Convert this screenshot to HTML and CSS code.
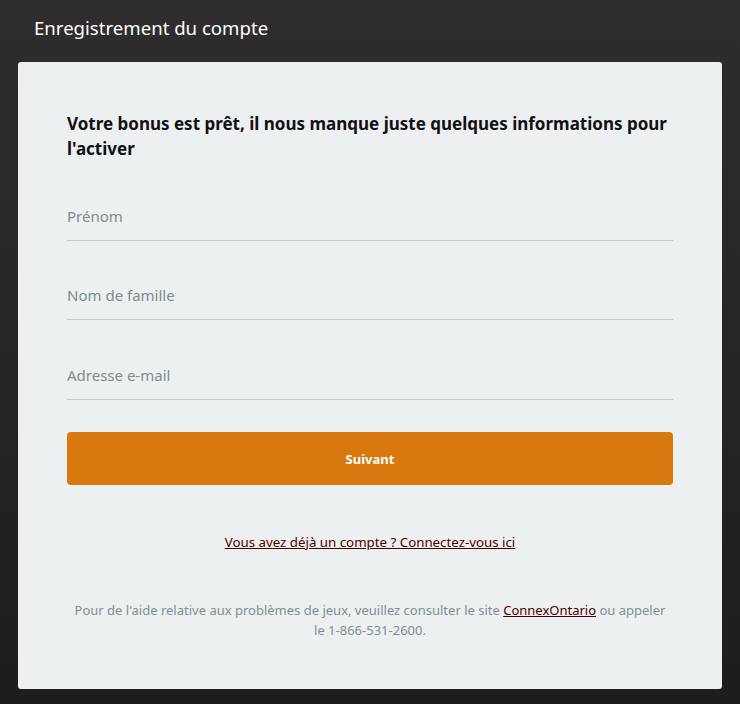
FILE: index.html
```html
<!DOCTYPE html>
<html lang="fr">
<head>
    <meta charset="UTF-8">
    <meta name="viewport" content="width=device-width, initial-scale=1.0">
    <title>Enregistrement du compte</title>
    <link rel="stylesheet" href="styles.css">
</head>
<body>
    <div class="page">
        <h1 class="page-title">Enregistrement du compte</h1>
        <div class="card">
            <h2 class="lead">Votre bonus est prêt, il nous manque juste quelques informations pour l'activer</h2>

            <form class="form">
                <input class="field" type="text" placeholder="Prénom">
                <input class="field" type="text" placeholder="Nom de famille">
                <input class="field" type="email" placeholder="Adresse e-mail">
                <button type="button" class="btn-next">Suivant</button>
            </form>

            <p class="login"><a href="#">Vous avez déjà un compte ? Connectez-vous ici</a></p>

            <p class="help">Pour de l'aide relative aux problèmes de jeux, veuillez consulter le site <a href="#">ConnexOntario</a> ou appeler le 1-866-531-2600.</p>
        </div>
    </div>
</body>
</html>
```

FILE: styles.css
```css
body {
    font-family: 'Noto Sans', 'Open Sans', sans-serif;
    margin: 0;
    padding: 0;
    background: linear-gradient(#2f2d2e, #1e1c1d);
    height: 704px;
    overflow: hidden;
}

.page {
    padding: 0 18px;
}

.page-title {
    margin: 0;
    padding: 15px 0 0 16px;
    height: 62px;
    box-sizing: border-box;
    font-size: 18.6px;
    font-weight: normal;
    color: #ffffff;
}

.card {
    background: #edf0f1;
    border-radius: 3px;
    padding: 49px 49px 0;
    height: 627px;
    box-sizing: border-box;
}

.lead {
    margin: 0 0 26px;
    font-size: 17px;
    line-height: 25px;
    font-weight: bold;
    color: #111;
}

.form {
    display: flex;
    flex-direction: column;
}

.field {
    box-sizing: border-box;
    border: none;
    border-bottom: 1px solid #c3cbcf;
    background: transparent;
    font-family: inherit;
    font-size: 15px;
    color: #333;
    height: 54px;
    padding: 5px 0 0;
    margin-bottom: 25px;
    outline: none;
}

.field:nth-child(3) {
    margin-bottom: 0;
    height: 55px;
}

.field::placeholder {
    color: #7e8b90;
}

.btn-next {
    margin-top: 32px;
    height: 53px;
    border: none;
    border-radius: 4px;
    background-color: #d7790f;
    color: #fff;
    font-family: inherit;
    font-weight: bold;
    font-size: 13px;
    cursor: pointer;
}

.login {
    margin: 48px 0 0;
    text-align: center;
    font-size: 13.3px;
}

.login a, .help a {
    color: #4a0000;
}

.help {
    margin: 49px 0 0;
    padding: 0 6px;
    text-align: center;
    font-size: 13px;
    line-height: 20px;
    color: #7f8e93;
}
```
